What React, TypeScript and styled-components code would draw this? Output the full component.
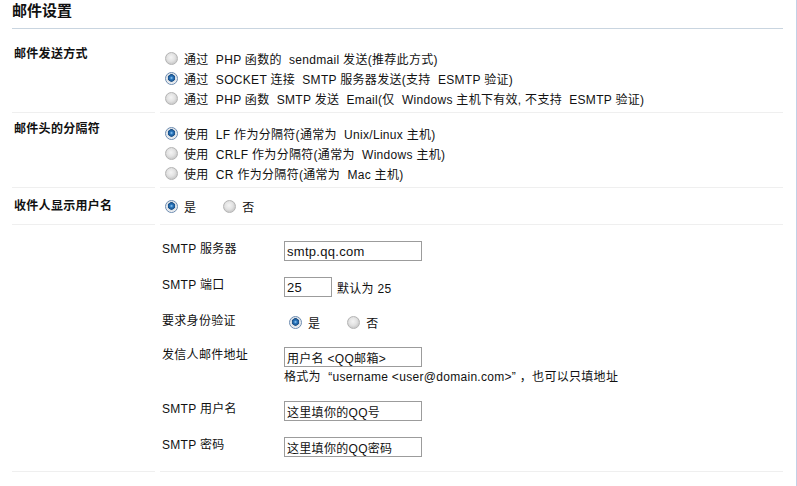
import styled, { createGlobalStyle } from 'styled-components';

const GlobalStyle = createGlobalStyle`
	html, body {
		margin: 0;
		padding: 0;
		background: #fff;
	}
	body {
		font-family: Tahoma, "Liberation Sans", "Noto Sans CJK SC", sans-serif;
		font-size: 12px;
		color: #111;
	}
`;

const Page = styled.div`
	box-sizing: border-box;
	width: 797px;
	min-height: 486px;
	padding: 0 13px 0 12px;
	border-right: 1px solid #c3d0e6;
	letter-spacing: 0.3px;
`;

const Title = styled.h2`
	margin: 0;
	height: 28px;
	line-height: 21px;
	font-size: 15px;
	font-weight: bold;
	letter-spacing: 0;
	border-bottom: 1px solid #c9d5e0;
`;

const Row = styled.div`
	display: grid;
	grid-template-columns: 143px 1fr;
	column-gap: 5px;
`;

const Label = styled.div<{ $top: number }>`
	padding: ${(p) => p.$top}px 0 0 2px;
	line-height: 20px;
	font-weight: bold;
	border-bottom: 1px solid #efefef;
`;

const Content = styled.div<{ $top: number; $bottom: number }>`
	padding: ${(p) => p.$top}px 0 ${(p) => p.$bottom}px 0;
	border-bottom: 1px solid #efefef;
`;

const OptionLine = styled.label<{ $h?: number }>`
	display: flex;
	align-items: center;
	height: ${(p) => p.$h ?? 20}px;
	white-space: pre;
`;

const InlineOptions = styled.div<{ $h?: number }>`
	display: flex;
	align-items: center;
	height: ${(p) => p.$h ?? 20}px;
	gap: 22px;
`;

const Option = styled.label`
	display: flex;
	align-items: center;
`;

const Radio = styled.span<{ $checked?: boolean }>`
	box-sizing: border-box;
	display: inline-block;
	width: 13px;
	height: 13px;
	margin: 0 6px 0 5px;
	border-radius: 50%;
	border: 1px solid ${(p) => (p.$checked ? '#6c8bb0' : '#b4b4b4')};
	background: ${(p) =>
		p.$checked
			? 'radial-gradient(circle at 50% 45%, #9fd0f5 0, #2a78c0 1.5px, #1b4f86 3.5px, #d8dee4 4px, #f6f6f6 6px)'
			: 'radial-gradient(circle at 45% 40%, #f4f4f4 0, #e2e2e2 4px, #cfcfcf 6px)'};
	flex: none;
`;

const Sub = styled.div`
	display: flex;
	flex-direction: column;
`;

const SubRow = styled.div`
	display: grid;
	grid-template-columns: 122px 1fr;
	padding: 8px 0 8px 2px;
`;

const SubLabel = styled.div`
	line-height: 16px;
`;

const Field = styled.div`
	display: flex;
	flex-direction: column;
`;

const FieldLine = styled.div`
	display: flex;
	align-items: center;
	gap: 5px;
`;

const TextInput = styled.input<{ $w: number; $fs?: number }>`
	box-sizing: border-box;
	width: ${(p) => p.$w}px;
	height: 20px;
	margin: 0;
	padding: 0 2px;
	border: 1px solid #9c9c9c;
	font-family: Tahoma, "Liberation Sans", "Noto Sans CJK SC", sans-serif;
	font-size: ${(p) => p.$fs ?? 12}px;
	letter-spacing: 0.3px;
	color: #111;
	outline: none;
`;

const Hint = styled.div`
	line-height: 16px;
	margin-top: 2px;
	white-space: pre;
`;

export default function App() {
	return (
		<>
			<GlobalStyle />
			<Page>
				<Title>邮件设置</Title>

				<Row>
					<Label $top={15}>邮件发送方式</Label>
					<Content $top={19} $bottom={4}>
						<OptionLine><Radio />通过  PHP 函数的  sendmail 发送(推荐此方式)</OptionLine>
						<OptionLine><Radio $checked />通过  SOCKET 连接  SMTP 服务器发送(支持  ESMTP 验证)</OptionLine>
						<OptionLine><Radio />通过  PHP 函数  SMTP 发送  Email(仅  Windows 主机下有效, 不支持  ESMTP 验证)</OptionLine>
					</Content>
				</Row>

				<Row>
					<Label $top={6}>邮件头的分隔符</Label>
					<Content $top={10} $bottom={4}>
						<OptionLine><Radio $checked />使用  LF 作为分隔符(通常为  Unix/Linux 主机)</OptionLine>
						<OptionLine><Radio />使用  CRLF 作为分隔符(通常为  Windows 主机)</OptionLine>
						<OptionLine><Radio />使用  CR 作为分隔符(通常为  Mac 主机)</OptionLine>
					</Content>
				</Row>

				<Row>
					<Label $top={8}>收件人显示用户名</Label>
					<Content $top={8} $bottom={8}>
						<InlineOptions>
							<Option><Radio $checked />是</Option>
							<Option><Radio />否</Option>
						</InlineOptions>
					</Content>
				</Row>

				<Row>
					<Label $top={0} />
					<Content $top={8} $bottom={6}>
						<Sub>
							<SubRow>
								<SubLabel>SMTP 服务器</SubLabel>
								<Field>
									<TextInput $w={138} $fs={13} defaultValue="smtp.qq.com" />
								</Field>
							</SubRow>
							<SubRow>
								<SubLabel>SMTP 端口</SubLabel>
								<FieldLine>
									<TextInput $w={48} $fs={13} defaultValue="25" />
									<span>默认为  25</span>
								</FieldLine>
							</SubRow>
							<SubRow>
								<SubLabel>要求身份验证</SubLabel>
								<InlineOptions $h={18}>
									<Option><Radio $checked />是</Option>
									<Option><Radio />否</Option>
								</InlineOptions>
							</SubRow>
							<SubRow>
								<SubLabel>发信人邮件地址</SubLabel>
								<Field>
									<TextInput $w={138} defaultValue="用户名 <QQ邮箱>" />
									<Hint>格式为  “username &lt;user@domain.com&gt;” ，也可以只填地址</Hint>
								</Field>
							</SubRow>
							<SubRow>
								<SubLabel>SMTP 用户名</SubLabel>
								<Field>
									<TextInput $w={138} defaultValue="这里填你的QQ号" />
								</Field>
							</SubRow>
							<SubRow>
								<SubLabel>SMTP 密码</SubLabel>
								<Field>
									<TextInput $w={138} defaultValue="这里填你的QQ密码" />
								</Field>
							</SubRow>
						</Sub>
					</Content>
				</Row>
			</Page>
		</>
	);
}
